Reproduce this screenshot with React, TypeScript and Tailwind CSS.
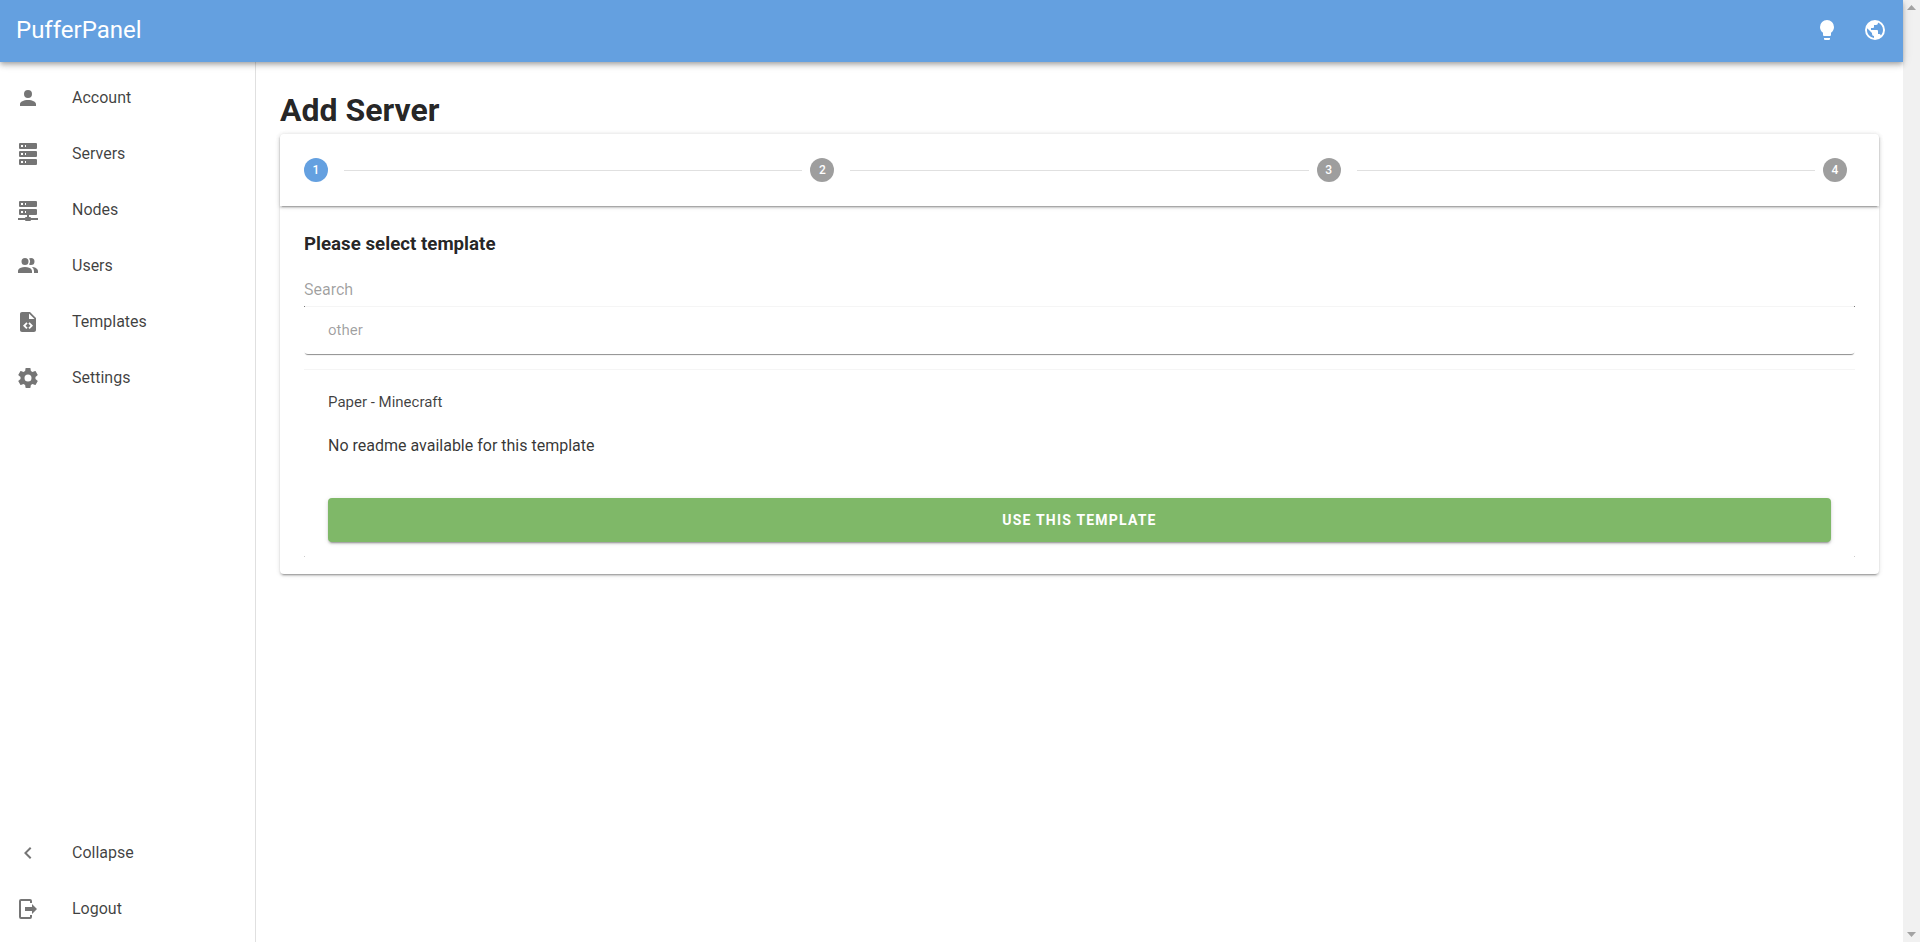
import React from 'react';

const ICONS = {
  account: 'M12,4A4,4 0 0,1 16,8A4,4 0 0,1 12,12A4,4 0 0,1 8,8A4,4 0 0,1 12,4M12,14C16.42,14 20,15.79 20,18V20H4V18C4,15.79 7.58,14 12,14Z',
  server: 'M4,1H20A1,1 0 0,1 21,2V6A1,1 0 0,1 20,7H4A1,1 0 0,1 3,6V2A1,1 0 0,1 4,1M4,9H20A1,1 0 0,1 21,10V14A1,1 0 0,1 20,15H4A1,1 0 0,1 3,14V10A1,1 0 0,1 4,9M4,17H20A1,1 0 0,1 21,18V22A1,1 0 0,1 20,23H4A1,1 0 0,1 3,22V18A1,1 0 0,1 4,17M9,5H10V3H9V5M9,13H10V11H9V13M9,21H10V19H9V21M5,3V5H7V3H5M5,11V13H7V11H5M5,19V21H7V19H5Z',
  serverNetwork: 'M13,19H14A1,1 0 0,1 15,20H22V22H15A1,1 0 0,1 14,23H10A1,1 0 0,1 9,22H2V20H9A1,1 0 0,1 10,19H11V17H4A1,1 0 0,1 3,16V12A1,1 0 0,1 4,11H20A1,1 0 0,1 21,12V16A1,1 0 0,1 20,17H13V19M4,3H20A1,1 0 0,1 21,4V8A1,1 0 0,1 20,9H4A1,1 0 0,1 3,8V4A1,1 0 0,1 4,3M9,7H10V5H9V7M9,15H10V13H9V15M5,5V7H7V5H5M5,13V15H7V13H5Z',
  users: 'M16 17V19H2V17S2 13 9 13 16 17 16 17M12.5 7.5A3.5 3.5 0 1 0 9 11A3.5 3.5 0 0 0 12.5 7.5M15.94 13A5.32 5.32 0 0 1 18 17V19H22V17S22 13.37 15.94 13M15 4A3.39 3.39 0 0 0 13.07 4.59A5 5 0 0 1 13.07 10.41A3.39 3.39 0 0 0 15 11A3.5 3.5 0 0 0 15 4Z',
  fileCode: 'M14 2H6C4.89 2 4 2.89 4 4V20C4 21.11 4.89 22 6 22H18C19.11 22 20 21.11 20 20V8L14 2M9.54 15.65L11.63 17.74L10.35 19L7 15.65L10.35 12.3L11.63 13.56L9.54 15.65M17 15.65L13.65 19L12.38 17.74L14.47 15.65L12.38 13.56L13.65 12.3L17 15.65M13 9V3.5L18.5 9H13Z',
  cog: 'M12,15.5A3.5,3.5 0 0,1 8.5,12A3.5,3.5 0 0,1 12,8.5A3.5,3.5 0 0,1 15.5,12A3.5,3.5 0 0,1 12,15.5M19.43,12.97C19.47,12.65 19.5,12.33 19.5,12C19.5,11.67 19.47,11.34 19.43,11L21.54,9.37C21.73,9.22 21.78,8.95 21.66,8.73L19.66,5.27C19.54,5.05 19.27,4.96 19.05,5.05L16.56,6.05C16.04,5.66 15.5,5.32 14.87,5.07L14.5,2.42C14.46,2.18 14.25,2 14,2H10C9.75,2 9.54,2.18 9.5,2.42L9.13,5.07C8.5,5.32 7.96,5.66 7.44,6.05L4.95,5.05C4.73,4.96 4.46,5.05 4.34,5.27L2.34,8.73C2.21,8.95 2.27,9.22 2.46,9.37L4.57,11C4.53,11.34 4.5,11.67 4.5,12C4.5,12.33 4.53,12.65 4.57,12.97L2.46,14.63C2.27,14.78 2.21,15.05 2.34,15.27L4.34,18.73C4.46,18.95 4.73,19.03 4.95,18.95L7.44,17.94C7.96,18.34 8.5,18.68 9.13,18.93L9.5,21.58C9.54,21.82 9.75,22 10,22H14C14.25,22 14.46,21.82 14.5,21.58L14.87,18.93C15.5,18.67 16.04,18.34 16.56,17.94L19.05,18.95C19.27,19.03 19.54,18.95 19.66,18.73L21.66,15.27C21.78,15.05 21.73,14.78 21.54,14.63L19.43,12.97Z',
  chevronLeft: 'M15.41,16.58L10.83,12L15.41,7.41L14,6L8,12L14,18L15.41,16.58Z',
  logout: 'M16,17V14H9V10H16V7L21,12L16,17M14,2A2,2 0 0,1 16,4V6H14V4H5V20H14V18H16V20A2,2 0 0,1 14,22H5A2,2 0 0,1 3,20V4A2,2 0 0,1 5,2H14Z',
  lightbulb: 'M12,2A7,7 0 0,0 5,9C5,11.38 6.19,13.47 8,14.74V17A1,1 0 0,0 9,18H15A1,1 0 0,0 16,17V14.74C17.81,13.47 19,11.38 19,9A7,7 0 0,0 12,2M9,21A1,1 0 0,0 10,22H14A1,1 0 0,0 15,21V20H9V21Z',
  earth: 'M17.9,17.39C17.64,16.59 16.89,16 16,16H15V13A1,1 0 0,0 14,12H8V10H10A1,1 0 0,0 11,9V7H13A2,2 0 0,0 15,5V4.59C17.93,5.77 20,8.64 20,12C20,14.08 19.2,15.97 17.9,17.39M11,19.93C7.05,19.44 4,16.08 4,12C4,11.38 4.08,10.78 4.21,10.21L9,15V16A2,2 0 0,0 11,18M12,2A10,10 0 0,0 2,12A10,10 0 0,0 12,22A10,10 0 0,0 22,12A10,10 0 0,0 12,2Z',
};

const Icon: React.FC<{ path: string; className?: string }> = ({ path, className }) => (
  <svg viewBox="0 0 24 24" className={`w-6 h-6 fill-current shrink-0 ${className ?? ''}`}>
    <path d={path} />
  </svg>
);

const NavItem: React.FC<{ icon: string; label: string }> = ({ icon, label }) => (
  <a className="flex items-center h-14 px-4 gap-8 text-base text-black/75">
    <Icon path={icon} className="text-black/54" />
    <span>{label}</span>
  </a>
);

const Step: React.FC<{ n: number; active?: boolean }> = ({ n, active }) => (
  <div className="flex items-center p-6 shrink-0">
    <span className={`flex items-center justify-center w-6 h-6 mr-2 rounded-full text-xs font-medium text-white ${active ? 'bg-[#64a0e0]' : 'bg-black/38'}`}>
      {n}
    </span>
  </div>
);

const Divider = () => <hr className="flex-1 -mx-4 border-t border-black/12" />;

export default function App() {
  return (
    <div className="flex h-[942px] overflow-hidden bg-white font-[Roboto,sans-serif] text-black/87">
      <div className="flex flex-col flex-1 min-w-0">
        <header className="relative z-10 flex items-center justify-between h-[62px] pl-4 pr-1 pb-0.5 bg-[#64a0e0] text-white shadow-[0_2px_4px_-1px_rgba(0,0,0,0.2),0_4px_5px_0_rgba(0,0,0,0.14),0_1px_10px_0_rgba(0,0,0,0.12)]">
          <div className="text-2xl">PufferPanel</div>
          <div className="flex">
            <button className="flex items-center justify-center w-12 h-12">
              <Icon path={ICONS.lightbulb} />
            </button>
            <button className="flex items-center justify-center w-12 h-12">
              <Icon path={ICONS.earth} />
            </button>
          </div>
        </header>

        <div className="flex flex-1 min-h-0">
          <nav className="flex flex-col justify-between w-64 shrink-0 pt-2 pb-[5px] border-r border-black/12">
            <div>
              <NavItem icon={ICONS.account} label="Account" />
              <NavItem icon={ICONS.server} label="Servers" />
              <NavItem icon={ICONS.serverNetwork} label="Nodes" />
              <NavItem icon={ICONS.users} label="Users" />
              <NavItem icon={ICONS.fileCode} label="Templates" />
              <NavItem icon={ICONS.cog} label="Settings" />
            </div>
            <div>
              <NavItem icon={ICONS.chevronLeft} label="Collapse" />
              <NavItem icon={ICONS.logout} label="Logout" />
            </div>
          </nav>

          <main className="flex-1 min-w-0 px-6 pt-6">
            <h1 className="text-[32px] leading-[48px] font-bold">Add Server</h1>

            <div className="rounded bg-white shadow-[0_3px_1px_-2px_rgba(0,0,0,0.2),0_2px_2px_0_rgba(0,0,0,0.14),0_1px_5px_0_rgba(0,0,0,0.12)]">
              <div className="flex items-center h-[72px] rounded-t shadow-[0_3px_1px_-2px_rgba(0,0,0,0.2),0_2px_2px_0_rgba(0,0,0,0.14),0_1px_5px_0_rgba(0,0,0,0.12)]">
                <Step n={1} active />
                <Divider />
                <Step n={2} />
                <Divider />
                <Step n={3} />
                <Divider />
                <Step n={4} />
              </div>

              <div className="px-6 pt-[22px] pb-[17px]">
                <h3 className="text-[18.72px] leading-8 font-bold">Please select template</h3>
                <div className="flex items-center h-[46px] pt-[14px] text-base text-black/38">Search</div>

                <div className="relative flex items-center h-12 px-6 rounded-b text-[15px] text-black/38 border-t border-[#f5f5f5] shadow-[0_2px_1px_-1px_rgba(0,0,0,0.45)]">
                  other
                  <span className="absolute -top-px left-0 w-px h-px bg-black/50" />
                  <span className="absolute -top-px right-0 w-px h-px bg-black/50" />
                </div>

                <div className="relative mt-[15px] border-t border-[#f5f5f5]">
                  <div className="flex items-center h-16 px-6 text-[15px] text-black/75">Paper - Minecraft</div>
                  <div className="px-6 pb-[15px]">
                    <p className="text-base leading-6 text-black/80">No readme available for this template</p>
                    <button className="flex items-center justify-center w-full h-11 mt-10 rounded bg-[#7fb868] text-sm font-bold uppercase tracking-[1.2px] text-white shadow-[0_3px_1px_-2px_rgba(0,0,0,0.2),0_2px_2px_0_rgba(0,0,0,0.14),0_1px_5px_0_rgba(0,0,0,0.12)]">
                      Use this template
                    </button>
                  </div>
                  <span className="absolute bottom-0 left-0 w-px h-px bg-black/20" />
                  <span className="absolute bottom-0 right-0 w-px h-px bg-black/20" />
                </div>
              </div>
            </div>
          </main>
        </div>
      </div>

      <div className="flex flex-col justify-between items-center w-[17px] shrink-0 py-[5px] bg-[#f1f1f1]">
        <svg viewBox="0 0 9 5" className="w-[9px] h-[5px] fill-[#a3a3a3]"><path d="M4.5 0L9 5H0Z" /></svg>
        <svg viewBox="0 0 9 5" className="w-[9px] h-[5px] fill-[#a3a3a3]"><path d="M0 0H9L4.5 5Z" /></svg>
      </div>
    </div>
  );
}
